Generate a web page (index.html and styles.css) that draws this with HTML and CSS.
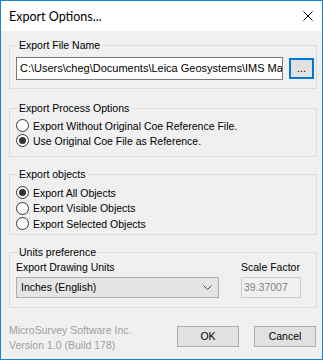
FILE: index.html
```html
<!DOCTYPE html>
<html>
<head>
<meta charset="utf-8">
<link rel="stylesheet" href="styles.css">
</head>
<body>
<div class="window">
  <div class="titlebar">
    <span class="title">Export Options...</span>
    <svg class="close" width="10" height="10" viewBox="0 0 10 10"><path d="M0.5 0.5 L9.5 9.5 M9.5 0.5 L0.5 9.5" stroke="#000" stroke-width="1" fill="none"/></svg>
  </div>
  <div class="content">
    <fieldset class="group g1">
      <legend>Export File Name</legend>
      <div class="file-row">
        <div class="textbox">C:\Users\cheg\Documents\Leica Geosystems\IMS Map360</div>
        <button class="btn browse">...</button>
      </div>
    </fieldset>
    <fieldset class="group g2">
      <legend>Export Process Options</legend>
      <div class="radio-row"><span class="radio"></span><span>Export Without Original Coe Reference File.</span></div>
      <div class="radio-row"><span class="radio checked"></span><span>Use Original Coe File as Reference.</span></div>
    </fieldset>
    <fieldset class="group g3">
      <legend>Export objects</legend>
      <div class="radio-row"><span class="radio checked"></span><span>Export All Objects</span></div>
      <div class="radio-row"><span class="radio"></span><span>Export Visible Objects</span></div>
      <div class="radio-row"><span class="radio"></span><span>Export Selected Objects</span></div>
    </fieldset>
    <fieldset class="group g4">
      <legend>Units preference</legend>
      <div class="units-row">
        <div class="units-col">
          <div class="label">Export Drawing Units</div>
          <div class="combo"><span>Inches (English)</span>
            <svg class="chev" width="9" height="5" viewBox="0 0 9 5"><path d="M0.5 0.5 L4.5 4.5 L8.5 0.5" stroke="#444" stroke-width="1" fill="none"/></svg>
          </div>
        </div>
        <div class="scale-col">
          <div class="label">Scale Factor</div>
          <div class="scalebox">39.37007</div>
        </div>
      </div>
    </fieldset>
    <div class="footer">
      <div class="info">
        <div>MicroSurvey Software Inc.</div>
        <div>Version 1.0 (Build 178)</div>
      </div>
      <div class="buttons">
        <button class="btn action">OK</button>
        <button class="btn action">Cancel</button>
      </div>
    </div>
  </div>
</div>
</body>
</html>
```

FILE: styles.css
```css
* { box-sizing: border-box; }
html, body { margin: 0; padding: 0; background: #ffffff; }
body { font-family: "Liberation Sans", Arial, sans-serif; font-size: 10.5px; color: #000; }

.window {
  width: 323px;
  height: 360px;
  border: 1px solid #1883d7;
  background: #f0f0f0;
  display: flex;
  flex-direction: column;
}

.titlebar {
  height: 30px;
  background: #ffffff;
  display: flex;
  align-items: center;
  justify-content: space-between;
  padding: 0 9px 0 8px;
  flex: none;
}
.title {
  font-family: "Lato", "Noto Sans", sans-serif;
  font-size: 12.5px;
  color: #000;
  line-height: 16px;
  margin-top: 1px;
}
.close { display: block; }

.content {
  flex: 1;
  padding: 8px 5px 0 8px;
  display: flex;
  flex-direction: column;
}

.group {
  margin: 0;
  border: 1px solid #dcdcdc;
  padding: 0 2px 0 6px;
  min-width: 0;
}
.group legend {
  padding: 0 2px;
  margin-left: 1px;
  line-height: 13px;
  height: 13px;
  color: #000;
  white-space: nowrap;
}

.g1 { padding-top: 5px; padding-bottom: 8px; }
.g2 { margin-top: 13px; padding-top: 3px; padding-bottom: 8px; }
.g3 { margin-top: 11px; padding-top: 4px; padding-bottom: 2px; }
.g4 { margin-top: 11px; padding-top: 2px; padding-bottom: 9px; }

.file-row {
  display: flex;
  align-items: center;
  gap: 6px;
}
.textbox {
  flex: 1;
  min-width: 0;
  height: 23px;
  border: 1px solid #7a7a7a;
  background: #fff;
  padding: 0 3px;
  font-size: 11px;
  line-height: 21px;
  white-space: nowrap;
  overflow: hidden;
}
.btn {
  font-family: "Liberation Sans", Arial, sans-serif;
  font-size: 10.5px;
  color: #000;
  background: #e1e1e1;
  border: 1px solid #adadad;
  padding: 0;
  margin: 0;
}
.browse {
  width: 25px;
  height: 21px;
  border: 2px solid #0078d7;
  line-height: 15px;
  flex: none;
}

.radio-row {
  display: flex;
  align-items: center;
  height: 15px;
  gap: 4px;
  white-space: nowrap;
}
.g3 .radio-row { height: 15.5px; }
.radio {
  width: 13px;
  height: 13px;
  border: 1px solid #333;
  border-radius: 50%;
  background: #fff;
  display: flex;
  align-items: center;
  justify-content: center;
  flex: none;
}
.radio.checked::after {
  content: "";
  width: 7px;
  height: 7px;
  border-radius: 50%;
  background: #333;
}

.units-row {
  display: flex;
  gap: 22px;
}
.units-col { width: 203px; flex: none; }
.scale-col { width: 60px; flex: none; }
.label { line-height: 13px; height: 13px; margin-bottom: 3px; white-space: nowrap; }
.combo {
  height: 21px;
  border: 1px solid #adadad;
  background: #e5e5e5;
  display: flex;
  align-items: center;
  justify-content: space-between;
  padding: 0 6px 0 4px;
}
.chev { display: block; }
.scalebox {
  height: 21px;
  border: 1px solid #cccccc;
  background: #f0f0f0;
  color: #838383;
  line-height: 19px;
  padding: 0 2px;
}

.footer {
  margin-top: 15px;
  display: flex;
  justify-content: space-between;
  align-items: flex-start;
}
.info {
  color: #a0a0a0;
  line-height: 15px;
  white-space: nowrap;
}
.buttons {
  display: flex;
  gap: 15px;
  margin-top: 3px;
  margin-right: 1px;
}
.action {
  width: 62px;
  height: 21px;
}
```
